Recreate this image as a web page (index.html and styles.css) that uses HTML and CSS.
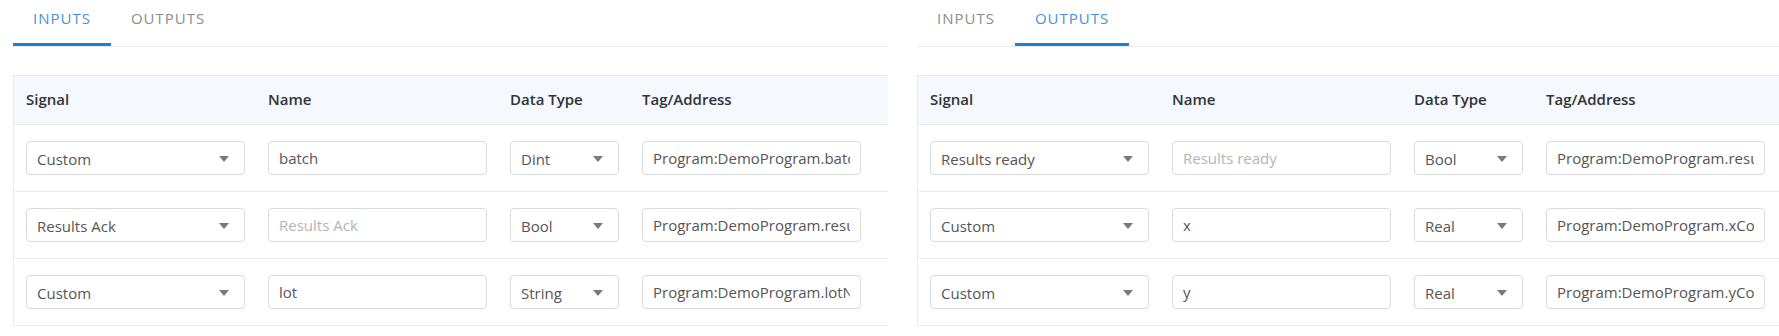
FILE: index.html
```html
<!DOCTYPE html>
<html lang="en">
<head>
    <meta charset="UTF-8">
    <meta name="viewport" content="width=device-width, initial-scale=1.0">
    <title>Signal mapping</title>
    <link rel="stylesheet" href="styles.css">
</head>
<body>
    <div class="page">
        <!-- 输入信号 -->
        <section class="panel">
            <div class="tabs">
                <div class="tab active">Inputs</div>
                <div class="tab">Outputs</div>
            </div>
            <div class="table">
                <div class="row head">
                    <div>Signal</div>
                    <div>Name</div>
                    <div>Data Type</div>
                    <div>Tag/Address</div>
                </div>
                <div class="row">
                    <div class="select"><span>Custom</span><svg viewBox="0 0 10 6"><path d="M0 0h10L5 6z"/></svg></div>
                    <input class="field" value="batch" placeholder="Name">
                    <div class="select"><span>Dint</span><svg viewBox="0 0 10 6"><path d="M0 0h10L5 6z"/></svg></div>
                    <input class="field" value="Program:DemoProgram.batchNumber">
                </div>
                <div class="row">
                    <div class="select"><span>Results Ack</span><svg viewBox="0 0 10 6"><path d="M0 0h10L5 6z"/></svg></div>
                    <input class="field" value="" placeholder="Results Ack">
                    <div class="select"><span>Bool</span><svg viewBox="0 0 10 6"><path d="M0 0h10L5 6z"/></svg></div>
                    <input class="field" value="Program:DemoProgram.resultsAck">
                </div>
                <div class="row">
                    <div class="select"><span>Custom</span><svg viewBox="0 0 10 6"><path d="M0 0h10L5 6z"/></svg></div>
                    <input class="field" value="lot" placeholder="Name">
                    <div class="select"><span>String</span><svg viewBox="0 0 10 6"><path d="M0 0h10L5 6z"/></svg></div>
                    <input class="field" value="Program:DemoProgram.lotNumber">
                </div>
            </div>
        </section>

        <!-- 输出信号 -->
        <section class="panel">
            <div class="tabs">
                <div class="tab">Inputs</div>
                <div class="tab active">Outputs</div>
            </div>
            <div class="table">
                <div class="row head">
                    <div>Signal</div>
                    <div>Name</div>
                    <div>Data Type</div>
                    <div>Tag/Address</div>
                </div>
                <div class="row">
                    <div class="select"><span>Results ready</span><svg viewBox="0 0 10 6"><path d="M0 0h10L5 6z"/></svg></div>
                    <input class="field" value="" placeholder="Results ready">
                    <div class="select"><span>Bool</span><svg viewBox="0 0 10 6"><path d="M0 0h10L5 6z"/></svg></div>
                    <input class="field" value="Program:DemoProgram.resultsReady">
                </div>
                <div class="row">
                    <div class="select"><span>Custom</span><svg viewBox="0 0 10 6"><path d="M0 0h10L5 6z"/></svg></div>
                    <input class="field" value="x" placeholder="Name">
                    <div class="select"><span>Real</span><svg viewBox="0 0 10 6"><path d="M0 0h10L5 6z"/></svg></div>
                    <input class="field" value="Program:DemoProgram.xCoordinate">
                </div>
                <div class="row">
                    <div class="select"><span>Custom</span><svg viewBox="0 0 10 6"><path d="M0 0h10L5 6z"/></svg></div>
                    <input class="field" value="y" placeholder="Name">
                    <div class="select"><span>Real</span><svg viewBox="0 0 10 6"><path d="M0 0h10L5 6z"/></svg></div>
                    <input class="field" value="Program:DemoProgram.yCoordinate">
                </div>
            </div>
        </section>
    </div>
</body>
</html>
```

FILE: styles.css
```css
:root {
    --primary-color: #4a90d9;
    --tab-line: #1e7fd8;
    --border-color: #e9ebee;
    --input-border: #d9dadc;
    --head-bg: #f5f8fc;
    --text-color: #555555;
    --head-color: #2f3338;
    --muted: #8c8c8c;
}

* {
    margin: 0;
    padding: 0;
    box-sizing: border-box;
}

body {
    font-family: 'Open Sans', 'Liberation Sans', sans-serif;
    font-size: 15px;
    line-height: 20px;
    color: var(--text-color);
    background: #ffffff;
    overflow: hidden;
}

.page {
    display: flex;
    gap: 29px;
    padding-left: 13px;
    width: 1779px;
    overflow: hidden;
}

.panel {
    flex: 0 0 875px;
}

.tabs {
    display: flex;
    border-bottom: 1px solid var(--border-color);
}

.tab {
    padding: 8px 20px 18px;
    text-transform: uppercase;
    letter-spacing: 1px;
    color: var(--muted);
}

.tab.active {
    color: var(--primary-color);
    padding-bottom: 15px;
    border-bottom: 3px solid var(--tab-line);
}

.table {
    margin-top: 28px;
    border-left: 1px solid var(--border-color);
    border-top: 1px solid var(--border-color);
}

.row {
    display: grid;
    grid-template-columns: 219px 219px 109px 219px;
    column-gap: 23px;
    padding: 16px 12px;
    border-bottom: 1px solid var(--border-color);
}

.row.head {
    padding: 13px 12px 15px;
    background-color: var(--head-bg);
    color: var(--head-color);
    font-weight: 600;
}

.select,
.field {
    height: 34px;
    border: 1px solid var(--input-border);
    border-radius: 4px;
    background: #ffffff;
    font: inherit;
    color: var(--text-color);
}

.select {
    display: flex;
    align-items: center;
    justify-content: space-between;
    padding: 1px 15px 0 10px;
}

.select svg {
    width: 10px;
    height: 6px;
    fill: #7a7a7a;
}

.field {
    width: 100%;
    padding: 0 10px;
    outline: none;
}

.field::placeholder {
    color: #b4b4b4;
}
```
